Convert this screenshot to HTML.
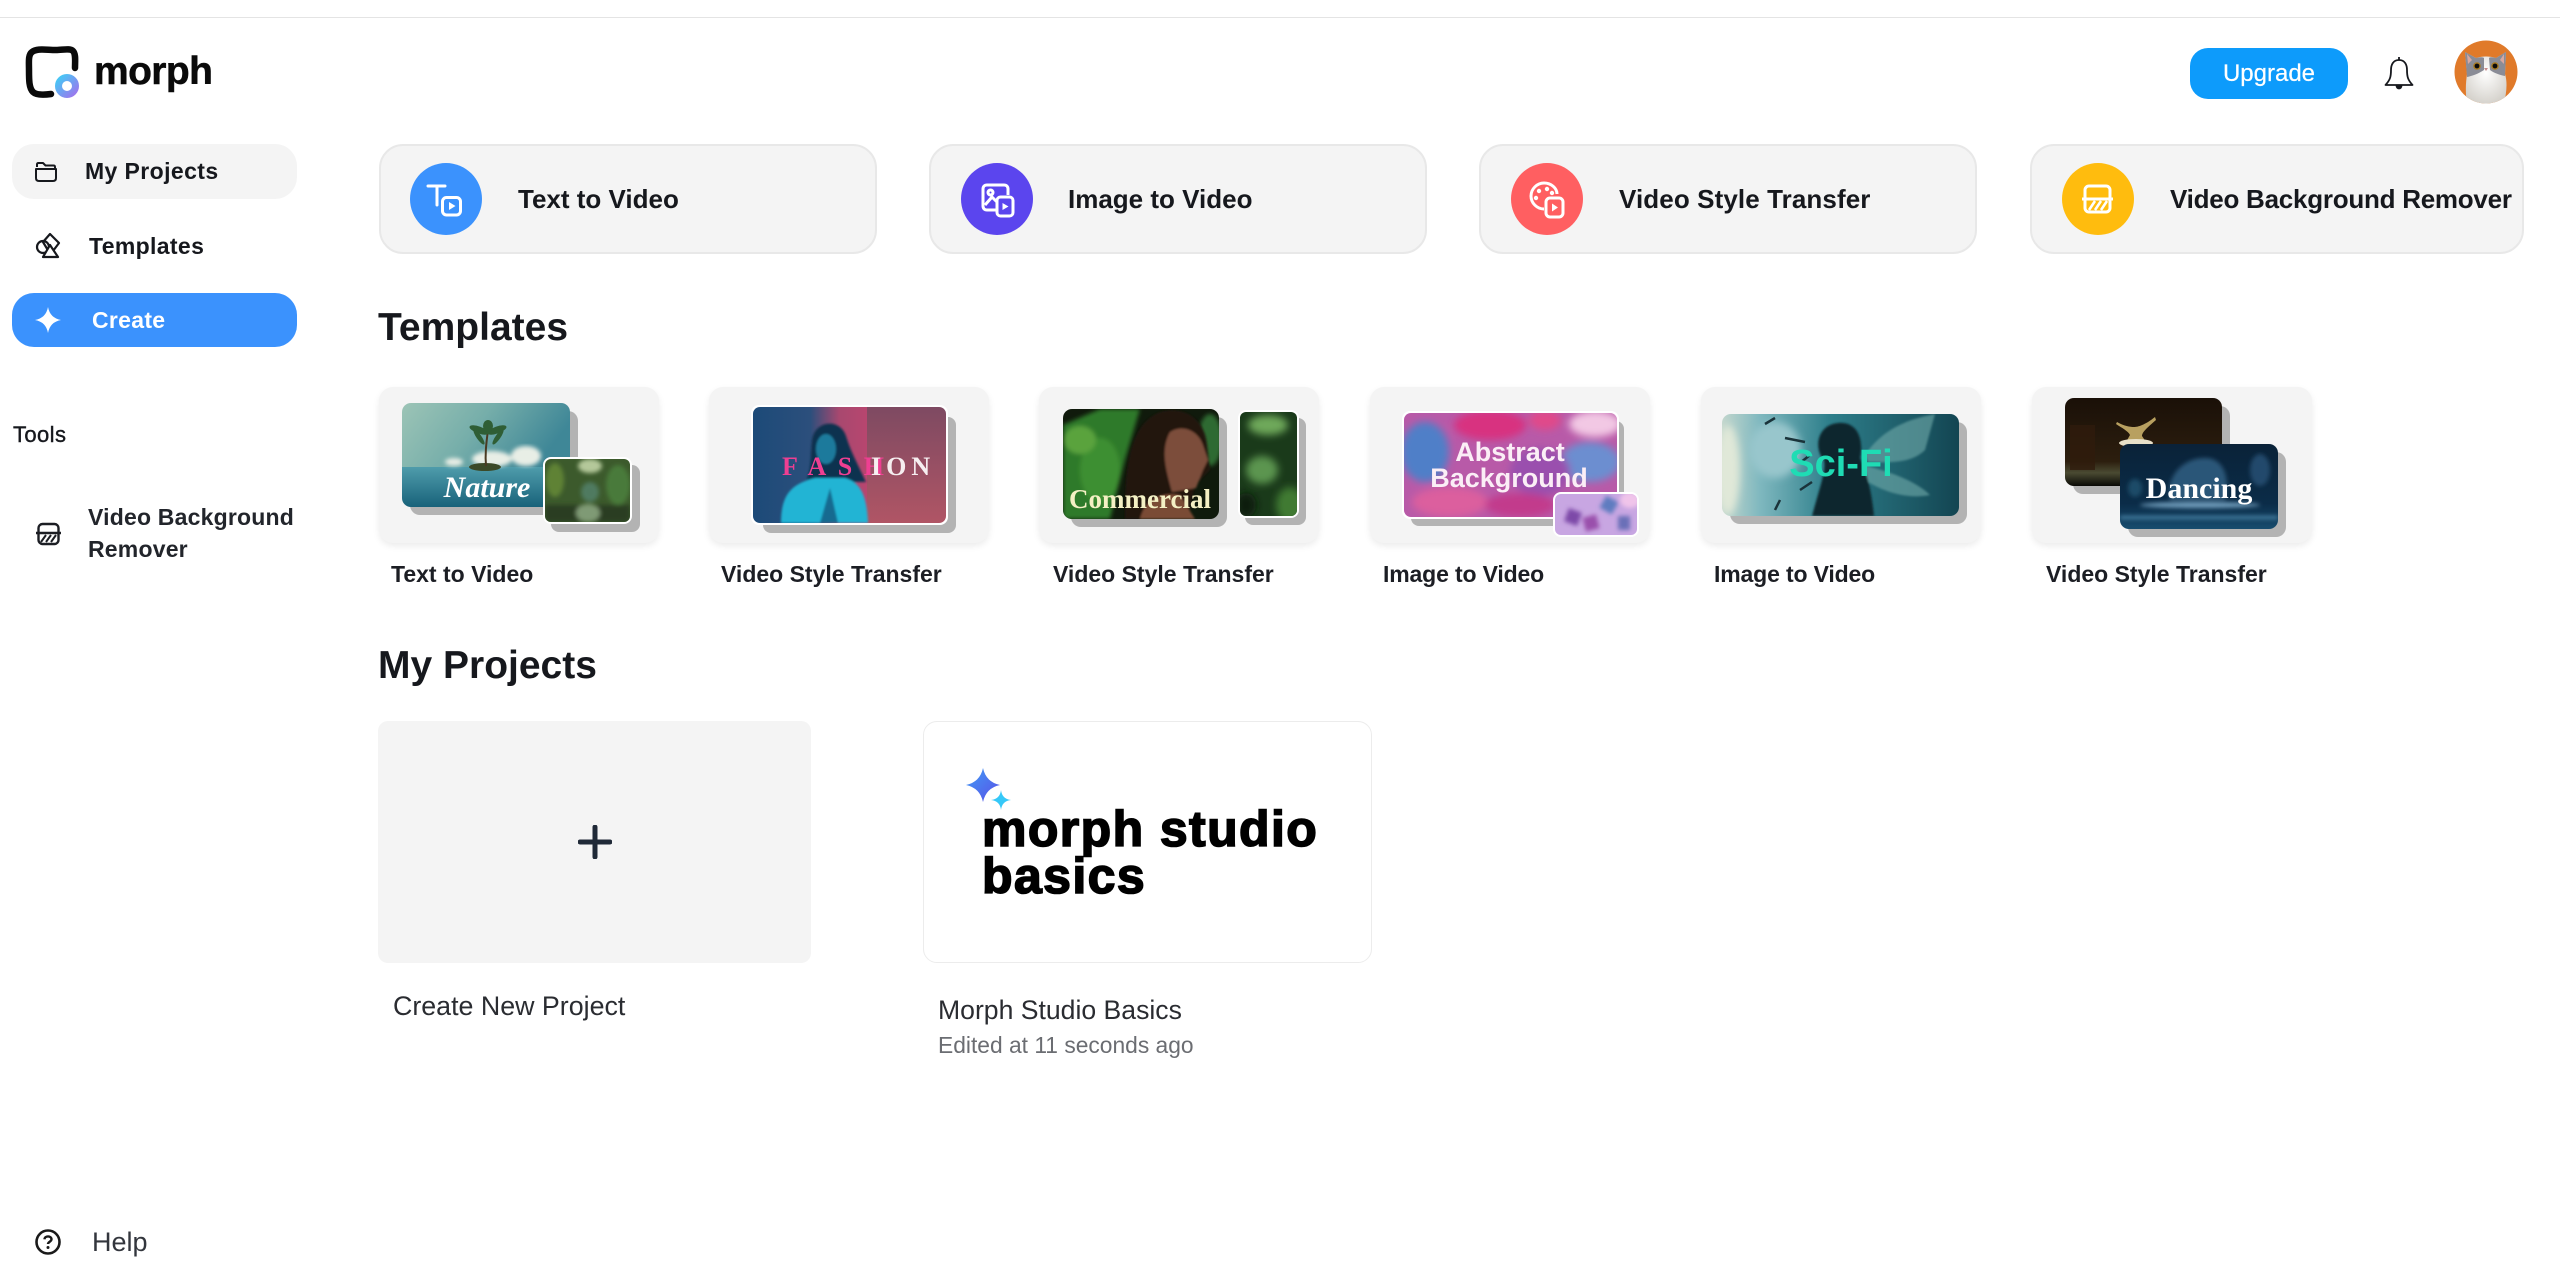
<!DOCTYPE html>
<html><head><meta charset="utf-8"><title>Morph Studio</title>
<style>
html,body{margin:0;padding:0;background:#fff;width:2560px;height:1283px;overflow:hidden}
body{position:relative;font-family:"Liberation Sans",sans-serif;color:#16181d}
.a{position:absolute}
.t{position:absolute;white-space:nowrap;line-height:40px;height:40px}
.pill{position:absolute;left:12px;width:285px;border-radius:22px}
.ac{position:absolute;top:144px;height:106px;width:494px;background:#f4f4f4;border:2px solid #e8e8e8;border-radius:24px}
.ci{position:absolute;top:163px;width:72px;height:72px;border-radius:50%}
.at{font-size:26px;font-weight:700;top:179px;color:#16181d}
.tc{position:absolute;top:387px;width:280px;height:156px;background:#f4f4f4;border-radius:14px;box-shadow:0 3px 7px rgba(0,0,0,.08)}
.tl{font-size:23px;font-weight:700;top:554px;color:#1c1e24}
h2{position:absolute;margin:0;font-size:39px;line-height:44px;font-weight:700;color:#16181d;white-space:nowrap}
</style></head><body>
<div class="a" style="left:0;top:17px;width:2560px;height:1px;background:#e4e4e4"></div>

<!-- logo -->
<svg class="a" style="left:20px;top:40px" width="70" height="66" viewBox="20 40 70 66">
<defs><linearGradient id="lg" x1="0" y1="0" x2="1" y2="1"><stop offset="0" stop-color="#45c8f5"/><stop offset="1" stop-color="#9a78ee"/></linearGradient></defs>
<path d="M51 94C44 95 36 95 33 92 29 88 29 80 29 70 29 62 28 55 32 52 37 48 46 50 56 50 63 50 70 48 73 51 76 54 75 61 75 68" fill="none" stroke="#0a0a0a" stroke-width="6.500" stroke-linecap="round"/>
<circle cx="67" cy="86" r="8.500" fill="#fff" stroke="url(#lg)" stroke-width="7"/>
</svg>
<div class="t" style="left:94px;top:52px;font-size:39px;font-weight:700;letter-spacing:-.6px;color:#0a0a0a;-webkit-text-stroke:.5px #0a0a0a">morph</div>

<!-- sidebar -->
<div class="pill" style="top:144px;height:55px;background:#f4f4f4"></div>
<svg class="a" style="left:34px;top:160px" width="24" height="24" viewBox="0 0 24 24" fill="none" stroke="#16181d" stroke-width="2" stroke-linejoin="round"><path d="M3 7V4.500C3 3.600 3.600 3 4.500 3H9L11.500 5.500H19.500C20.500 5.500 21 6 21 7V9"/><path d="M2 9H22V18C22 20 21 21 19 21H5C3 21 2 20 2 18Z"/></svg>
<div class="t" style="left:85px;top:151px;font-size:23px;font-weight:700;letter-spacing:.4px">My Projects</div>
<svg class="a" style="left:34px;top:232px" width="28" height="28" viewBox="0 0 28 28" fill="none" stroke="#16181d" stroke-width="2.200" stroke-linejoin="round"><circle cx="9" cy="15" r="6"/><path d="M16 2L25 11 19 19 15 20 9 10Z"/><path d="M16 13L24 25H9Z" fill="#fff"/></svg>
<div class="t" style="left:89px;top:226px;font-size:23px;font-weight:700;letter-spacing:.35px">Templates</div>
<div class="pill" style="top:293px;height:54px;background:#3b92fd"></div>
<svg class="a" style="left:35px;top:307px" width="26" height="26" viewBox="0 0 26 26"><path d="M13 0Q15 11 26 13 15 15 13 26 11 15 0 13 11 11 13 0Z" fill="#fff"/></svg>
<div class="t" style="left:92px;top:300px;font-size:23px;font-weight:700;color:#fff;letter-spacing:.3px">Create</div>
<div class="t" style="left:13px;top:415px;font-size:22px;font-weight:400;letter-spacing:.4px;-webkit-text-stroke:.4px #16181d">Tools</div>
<svg class="a" style="left:36px;top:522px" width="25" height="24" viewBox="0 0 25 24" fill="none" stroke="#1c1e24" stroke-width="2.400"><rect x="2.500" y="2" width="20" height="20" rx="4"/><path d="M0 11H25"/><path d="M5 20L10 13M10 20L15 13M15 20L20 13" stroke-width="2"/></svg>
<div class="t" style="left:88px;top:497px;font-size:23px;font-weight:700;letter-spacing:.2px;color:#22252b">Video Background</div>
<div class="t" style="left:88px;top:529px;font-size:23px;font-weight:700;letter-spacing:.2px;color:#22252b">Remover</div>
<svg class="a" style="left:35px;top:1229px" width="26" height="26" viewBox="0 0 26 26" fill="none" stroke="#1a1a1a" stroke-width="2.600"><circle cx="13" cy="13" r="11.500"/><path d="M9.500 10.300C9.700 6.500 16.500 6.500 16.500 10.300 16.500 12.700 13 12.700 13 15" stroke-width="2.400"/><circle cx="13" cy="18.500" r="1.500" fill="#1a1a1a" stroke="none"/></svg>
<div class="t" style="left:92px;top:1222px;font-size:27px;color:#33363d">Help</div>

<!-- header right -->
<div class="a" style="left:2190px;top:48px;width:158px;height:51px;border-radius:18px;background:#0d9bfb"></div>
<div class="t" style="left:2190px;width:158px;text-align:center;top:54px;font-size:24px;color:#fff;-webkit-text-stroke:.2px #fff">Upgrade</div>
<svg class="a" style="left:2381px;top:55px" width="36" height="36" viewBox="0 0 36 36" fill="none" stroke="#16181d" stroke-width="1.800" stroke-linejoin="round"><path d="M18 2V5"/><path d="M18 5C12 5 10 10 10 15 10 22 9 25 4.500 30H31.500C27 25 26 22 26 15 26 10 24 5 18 5Z"/><path d="M15.500 30.500C15.500 34.500 20.500 34.500 20.500 30.500" fill="#16181d"/></svg>
<svg class="a" style="left:2454px;top:40px" width="64" height="64" viewBox="0 0 64 64">
<defs><clipPath id="av"><circle cx="32" cy="32" r="31.500"/></clipPath><radialGradient id="cw" cx=".5" cy=".4" r=".8"><stop offset="0" stop-color="#fff"/><stop offset="1" stop-color="#c8c4bc"/></radialGradient></defs>
<g clip-path="url(#av)"><rect width="64" height="64" fill="#e07a2a"/>
<path d="M13 64C11 50 12 42 13 34L11 12 22 18C28 16 36 16 42 18L52 12 51 34C54 44 52 54 50 64Z" fill="url(#cw)"/>
<path d="M11 12L22 18C26 17 29 17 30 18L30 30C24 34 18 36 13 37ZM52 12L42 18C38 17 36 17 35 18L36 30C40 33 46 35 51 36Z" fill="#8a8c96"/>
<path d="M13 14L18 20 14 24Z" fill="#d8a8a0"/><path d="M50 14L46 20 50 24Z" fill="#d8a8a0"/>
<circle cx="23" cy="26" r="3.800" fill="#a87a20"/><circle cx="41" cy="26" r="3.800" fill="#a87a20"/><circle cx="23" cy="26" r="2.400" fill="#0a0a0a"/><circle cx="41" cy="26" r="2.400" fill="#0a0a0a"/>
<path d="M30 28H34L32 31Z" fill="#c58a8a"/></g></svg>

<!-- action cards -->
<div class="ac" style="left:379px"></div><div class="ac" style="left:929px"></div><div class="ac" style="left:1479px"></div><div class="ac" style="left:2030px;width:490px"></div>
<div class="ci" style="left:410px;background:#3b92fd"></div><div class="ci" style="left:961px;background:#5b45ee"></div><div class="ci" style="left:1511px;background:#ff5f61"></div><div class="ci" style="left:2062px;background:#ffbc0e"></div>
<svg class="a" style="left:410px;top:163px" width="72" height="72" viewBox="0 0 72 72" fill="none" stroke="#fff" stroke-width="3" stroke-linecap="round"><path d="M18 23H35M27 23V42"/><rect x="32.500" y="34.500" width="18" height="17.500" rx="4"/><path d="M39 39L45.500 43 39 47Z" fill="#fff" stroke="none"/></svg>
<svg class="a" style="left:961px;top:163px" width="72" height="72" viewBox="0 0 72 72" fill="none" stroke="#fff" stroke-width="3" stroke-linejoin="round"><path d="M35 47H26C23.500 47 22 45.500 22 43V26C22 23.500 23.500 22 26 22H43C45.500 22 47 23.500 47 26V32"/><circle cx="29.500" cy="29.500" r="2.500"/><path d="M24 42L31 34 36 39"/><rect x="36" y="34" width="16" height="19" rx="3.500"/><path d="M41.500 40L47.500 43.500 41.500 47Z" fill="#fff" stroke="none"/></svg>
<svg class="a" style="left:1511px;top:163px" width="72" height="72" viewBox="0 0 72 72" fill="none" stroke="#fff" stroke-width="3" stroke-linejoin="round"><path d="M33 46C26 46 20 40 20 33 20 26 26 20 33 20 40 20 46 25 46 31"/><circle cx="28" cy="28" r="2.200" fill="#fff" stroke="none"/><circle cx="36" cy="26" r="2.200" fill="#fff" stroke="none"/><circle cx="25" cy="35" r="2.200" fill="#fff" stroke="none"/><circle cx="41" cy="30" r="2.200" fill="#fff" stroke="none"/><rect x="35" y="35" width="17" height="19" rx="4"/><path d="M41 40.500L47 44.500 41 48.500Z" fill="#fff" stroke="none"/></svg>
<svg class="a" style="left:2062px;top:163px" width="72" height="72" viewBox="0 0 72 72" fill="none" stroke="#fff" stroke-width="3"><rect x="23" y="23" width="25" height="26" rx="4"/><path d="M20 36H51"/><path d="M27 47L33 38M33 47L39 38M39 47L45 38" stroke-width="2.600"/></svg>
<div class="t at" style="left:518px">Text to Video</div>
<div class="t at" style="left:1068px">Image to Video</div>
<div class="t at" style="left:1619px;letter-spacing:.1px">Video Style Transfer</div>
<div class="t at" style="left:2170px;letter-spacing:-.25px">Video Background Remover</div>

<h2 style="left:378px;top:306px">Templates</h2>

<!-- template cards -->
<div class="tc" style="left:379px"></div><div class="tc" style="left:709px"></div><div class="tc" style="left:1039px"></div><div class="tc" style="left:1370px"></div><div class="tc" style="left:1701px"></div><div class="tc" style="left:2032px"></div>

<svg class="a" style="left:0;top:0" width="2560" height="600" viewBox="0 0 2560 600">
<defs>
<filter id="b1"><feGaussianBlur stdDeviation="1"/></filter>
<filter id="b2"><feGaussianBlur stdDeviation="2"/></filter>
<filter id="b4"><feGaussianBlur stdDeviation="4"/></filter>
<clipPath id="c1"><rect x="402" y="403" width="168" height="104" rx="9"/></clipPath>
<clipPath id="c1b"><rect x="545" y="459" width="85" height="63" rx="6"/></clipPath>
<clipPath id="c2"><rect x="753" y="407" width="193" height="116" rx="7"/></clipPath>
<clipPath id="c3"><rect x="1063" y="409" width="156" height="110" rx="9"/></clipPath>
<clipPath id="c3b"><rect x="1240" y="412" width="57" height="104" rx="6"/></clipPath>
<clipPath id="c4"><rect x="1404" y="413" width="213" height="104" rx="7"/></clipPath>
<clipPath id="c4b"><rect x="1555" y="494" width="82" height="41" rx="6"/></clipPath>
<clipPath id="c5"><rect x="1722" y="414" width="237" height="102" rx="9"/></clipPath>
<clipPath id="c6"><rect x="2065" y="398" width="157" height="88" rx="9"/></clipPath>
<clipPath id="c6b"><rect x="2120" y="444" width="158" height="85" rx="9"/></clipPath>
<linearGradient id="sky" x1="0" y1="0" x2="1" y2=".3"><stop offset="0" stop-color="#9cc4b6"/><stop offset=".5" stop-color="#76aeaa"/><stop offset="1" stop-color="#3f8797"/></linearGradient>
<linearGradient id="sea" x1="0" y1="0" x2="0" y2="1"><stop offset="0" stop-color="#4f9cab"/><stop offset="1" stop-color="#18627a"/></linearGradient>
<linearGradient id="fa" x1="0" y1="0" x2="1" y2="0"><stop offset="0" stop-color="#1c4a78"/><stop offset=".5" stop-color="#2c4f7c"/><stop offset=".75" stop-color="#a8486f"/><stop offset="1" stop-color="#b8466f"/></linearGradient>
<linearGradient id="fb" x1="0" y1="0" x2="0" y2="1"><stop offset="0" stop-color="#7e4a62"/><stop offset="1" stop-color="#b05565"/></linearGradient>
<linearGradient id="sf" x1="0" y1="0" x2="1" y2="0"><stop offset="0" stop-color="#c2d6cd"/><stop offset=".16" stop-color="#7fb8bf"/><stop offset=".45" stop-color="#2e7f8b"/><stop offset="1" stop-color="#134552"/></linearGradient>
<linearGradient id="bal" x1="0" y1="0" x2="0" y2="1"><stop offset="0" stop-color="#1a1008"/><stop offset=".72" stop-color="#2c1e0e"/><stop offset=".85" stop-color="#4a4a32"/><stop offset="1" stop-color="#0a0a06"/></linearGradient>
<linearGradient id="wat" x1="0" y1="0" x2="0" y2="1"><stop offset="0" stop-color="#0a2238"/><stop offset=".7" stop-color="#0b2c48"/><stop offset="1" stop-color="#174c6e"/></linearGradient>
</defs>

<!-- shadows -->
<g fill="#b3b3b3">
<rect x="410" y="411" width="168" height="104" rx="10"/><rect x="551" y="465" width="89" height="67" rx="8"/>
<rect x="763" y="417" width="193" height="116" rx="8"/>
<rect x="1071" y="417" width="156" height="110" rx="10"/><rect x="1245" y="418" width="61" height="107" rx="8"/>
<rect x="1411" y="421" width="213" height="105" rx="8"/>
<rect x="1730" y="422" width="237" height="102" rx="10"/>
<rect x="2073" y="406" width="157" height="88" rx="10"/><rect x="2128" y="452" width="158" height="85" rx="10"/>
</g>

<!-- 1 nature -->
<g clip-path="url(#c1)"><rect x="402" y="403" width="168" height="65" fill="url(#sky)"/><rect x="402" y="467" width="168" height="40" fill="url(#sea)"/>
<g filter="url(#b2)" fill="#e8eee6"><ellipse cx="526" cy="456" rx="15" ry="10"/><ellipse cx="492" cy="459" rx="20" ry="8"/><ellipse cx="454" cy="462" rx="9" ry="4"/></g>
<ellipse cx="485" cy="467" rx="16" ry="4" fill="#3b4a28"/><path d="M486 466C485 455 486 445 488 430" stroke="#4a3a22" stroke-width="2" fill="none"/>
<g fill="#2f5e35"><ellipse cx="479" cy="430" rx="10" ry="3.500" transform="rotate(20 479 430)"/><ellipse cx="497" cy="430" rx="10" ry="3.500" transform="rotate(-20 497 430)"/><ellipse cx="488" cy="426" rx="5" ry="6"/><ellipse cx="479" cy="437" rx="9" ry="2.500" transform="rotate(55 479 437)"/><ellipse cx="498" cy="437" rx="9" ry="2.500" transform="rotate(-55 498 437)"/></g>
<text x="487" y="497" text-anchor="middle" font-family="Liberation Serif" font-style="italic" font-weight="700" font-size="30" fill="#fff">Nature</text></g>
<rect x="543" y="457" width="89" height="67" rx="8" fill="#fff"/>
<g clip-path="url(#c1b)"><rect x="545" y="459" width="85" height="63" fill="#3c5a2c"/>
<g filter="url(#b2)"><ellipse cx="590" cy="466" rx="12" ry="7" fill="#b4c89a"/><ellipse cx="555" cy="480" rx="9" ry="17" fill="#5f8236"/><ellipse cx="618" cy="485" rx="12" ry="20" fill="#4a7a3a"/><ellipse cx="590" cy="492" rx="9" ry="10" fill="#4f7a60"/><rect x="545" y="505" width="85" height="17" fill="#2a3c22"/><ellipse cx="588" cy="513" rx="12" ry="9" fill="#7f9a75"/></g></g>

<!-- 2 fashion -->
<rect x="751" y="405" width="197" height="120" rx="8" fill="#fff"/>
<g clip-path="url(#c2)"><rect x="753" y="407" width="115" height="116" fill="url(#fa)"/><rect x="867" y="407" width="79" height="116" fill="url(#fb)"/>
<g filter="url(#b1)"><path d="M812 440C815 420 840 418 846 436 850 450 858 465 866 482L806 482C812 468 810 455 812 440Z" fill="#10324f"/>
<ellipse cx="826" cy="449" rx="10" ry="15" fill="#1e7a9c"/>
<path d="M781 523C781 496 790 484 815 478H845C860 482 867 495 868 523Z" fill="#24b4d4"/><path d="M820 523L830 488 838 523Z" fill="#136a90"/></g>
<g font-family="Liberation Serif" font-size="26" font-weight="700"><text x="782" y="475" fill="#ee3f92" letter-spacing="11.500">FASH</text><text x="871" y="475" fill="#f6eef0" letter-spacing="5">ION</text></g></g>

<!-- 3 commercial -->
<g clip-path="url(#c3)"><rect x="1063" y="409" width="156" height="110" fill="#101a0c"/>
<g filter="url(#b2)"><path d="M1063 425L1100 409H1140L1125 460 1110 519H1063Z" fill="#2f7a2a"/><ellipse cx="1100" cy="470" rx="20" ry="32" fill="#3e8f30"/><ellipse cx="1080" cy="440" rx="16" ry="14" fill="#5aa33e"/><ellipse cx="1210" cy="440" rx="12" ry="26" fill="#2d6a32"/></g>
<g filter="url(#b1)"><path d="M1125 519C1125 470 1128 425 1160 412 1185 405 1205 420 1207 445L1210 470 1195 485C1190 505 1190 510 1188 519Z" fill="#241610"/>
<path d="M1170 432C1182 424 1198 430 1203 445L1208 460 1203 470 1196 488 1172 492C1166 470 1160 450 1170 432Z" fill="#7c4e3a"/>
<path d="M1140 519C1145 497 1165 492 1180 495L1195 519Z" fill="#7a4c36"/></g>
<text x="1140" y="508" text-anchor="middle" font-family="Liberation Serif" font-size="27" font-weight="700" fill="#f4f0c4">Commercial</text></g>
<rect x="1238" y="410" width="61" height="108" rx="8" fill="#fff"/>
<g clip-path="url(#c3b)"><rect x="1240" y="412" width="57" height="104" fill="#1a3a1a"/><g filter="url(#b4)"><ellipse cx="1268" cy="425" rx="20" ry="10" fill="#6ea85a"/><ellipse cx="1262" cy="470" rx="16" ry="14" fill="#5c9550"/><ellipse cx="1290" cy="505" rx="14" ry="18" fill="#3f7a33"/><ellipse cx="1246" cy="505" rx="10" ry="12" fill="#0c1a0c"/></g></g>

<!-- 4 abstract -->
<rect x="1402" y="411" width="217" height="108" rx="8" fill="#fff"/>
<g clip-path="url(#c4)"><rect x="1404" y="413" width="213" height="104" fill="#b85aa8"/>
<g filter="url(#b4)"><ellipse cx="1425" cy="452" rx="24" ry="30" fill="#4f7fc8"/><ellipse cx="1490" cy="425" rx="36" ry="15" fill="#d83080"/><ellipse cx="1595" cy="424" rx="26" ry="13" fill="#f2c8e4"/><ellipse cx="1590" cy="462" rx="30" ry="20" fill="#6c8ed0"/><ellipse cx="1540" cy="472" rx="30" ry="24" fill="#9a4fae"/><ellipse cx="1450" cy="502" rx="38" ry="15" fill="#dc5f9e"/><ellipse cx="1520" cy="505" rx="35" ry="12" fill="#c23a8c"/><ellipse cx="1545" cy="420" rx="16" ry="10" fill="#e04a8a"/></g>
<g font-family="Liberation Sans" font-size="27" font-weight="700" fill="#fbeef6" text-anchor="middle"><text x="1510" y="461">Abstract</text><text x="1509" y="487">Background</text></g></g>
<rect x="1553" y="492" width="86" height="45" rx="8" fill="#fff"/>
<g clip-path="url(#c4b)"><rect x="1555" y="494" width="82" height="41" fill="#c8a6e2"/><g filter="url(#b2)"><rect x="1566" y="510" width="14" height="14" fill="#7d4aa8" transform="rotate(20 1573 517)"/><rect x="1602" y="498" width="14" height="14" fill="#5f7cc0" transform="rotate(30 1609 505)"/><rect x="1584" y="516" width="14" height="14" fill="#9a50ac" transform="rotate(-15 1591 523)"/><rect x="1618" y="516" width="12" height="14" fill="#6a70b8"/><ellipse cx="1630" cy="500" rx="10" ry="8" fill="#f0c4ea"/></g></g>

<!-- 5 scifi -->
<g clip-path="url(#c5)"><rect x="1722" y="414" width="237" height="102" fill="url(#sf)"/>
<g filter="url(#b4)"><ellipse cx="1728" cy="470" rx="12" ry="45" fill="#e0e8d8"/><ellipse cx="1775" cy="450" rx="26" ry="28" fill="#98c6cc"/></g>
<g filter="url(#b1)"><path d="M1865 455C1885 425 1915 418 1935 414L1925 450C1910 465 1885 462 1868 462ZM1862 465C1885 470 1915 480 1930 495 1905 500 1880 490 1865 480Z" fill="#6aa5a4" opacity=".65"/>
<path d="M1812 516C1822 480 1826 470 1824 460 1814 450 1816 425 1838 423 1858 421 1864 440 1860 458 1868 475 1872 495 1874 516Z" fill="#10262e"/></g>
<g stroke="#1a333a" stroke-width="2.500"><path d="M1765 424L1775 418M1785 438L1805 442M1800 463L1810 455M1775 510L1780 500M1800 490L1812 482"/></g>
<text x="1841" y="476" text-anchor="middle" font-family="Liberation Sans" font-size="38" font-weight="700" fill="#1fdcb4">Sci-Fi</text></g>

<!-- 6 dancing -->
<g clip-path="url(#c6)"><rect x="2065" y="398" width="157" height="88" fill="url(#bal)"/><rect x="2070" y="425" width="25" height="45" fill="#2f1c0c" opacity=".8"/>
<g transform="translate(0,-14)"><path d="M2117 436C2124 440 2130 441 2134 441 2138 441 2145 439 2155 431L2156 434C2148 441 2142 446 2142 450L2146 456H2126L2130 449C2128 445 2122 442 2116 438Z" fill="#b8a060"/><ellipse cx="2136" cy="457" rx="17" ry="4" fill="#e8e0c8"/></g></g>
<g clip-path="url(#c6b)"><rect x="2120" y="444" width="158" height="85" fill="url(#wat)"/>
<g filter="url(#b2)"><path d="M2170 500C2165 480 2180 458 2205 458 2225 458 2230 480 2225 500Z" fill="#2a5678"/><ellipse cx="2200" cy="505" rx="60" ry="3" fill="#6f9dbc"/><rect x="2120" y="516" width="158" height="3" fill="#4b85a8"/><ellipse cx="2260" cy="470" rx="10" ry="16" fill="#244a6c"/><ellipse cx="2135" cy="488" rx="7" ry="9" fill="#1a4c68"/></g>
<text x="2199" y="498" text-anchor="middle" font-family="Liberation Serif" font-size="30" font-weight="700" fill="#fff">Dancing</text></g>
</svg>

<div class="t tl" style="left:391px">Text to Video</div>
<div class="t tl" style="left:721px">Video Style Transfer</div>
<div class="t tl" style="left:1053px">Video Style Transfer</div>
<div class="t tl" style="left:1383px;letter-spacing:-.15px">Image to Video</div>
<div class="t tl" style="left:1714px;letter-spacing:-.15px">Image to Video</div>
<div class="t tl" style="left:2046px">Video Style Transfer</div>

<h2 style="left:378px;top:644px">My Projects</h2>

<div class="a" style="left:378px;top:721px;width:433px;height:242px;background:#f4f4f4;border-radius:10px"></div>
<svg class="a" style="left:578px;top:825px" width="34" height="34" viewBox="0 0 34 34"><path d="M17 2V32M2 17H32" stroke="#1f2937" stroke-width="5" stroke-linecap="round"/></svg>
<div class="t" style="left:393px;top:986px;font-size:26.800px;color:#2a2c31">Create New Project</div>

<div class="a" style="left:923px;top:721px;width:447px;height:240px;background:#fff;border:1.500px solid #ececec;border-radius:14px"></div>
<svg class="a" style="left:960px;top:762px" width="60" height="60" viewBox="0 0 60 60">
<defs><linearGradient id="st" x1="0" y1="0" x2="1" y2="1"><stop offset="0" stop-color="#3f9cf5"/><stop offset="1" stop-color="#5a4fe8"/></linearGradient></defs>
<path d="M23 6Q26 20 40 23 26 26 23 40 20 26 6 23 20 20 23 6Z" fill="url(#st)"/>
<path d="M41 28Q42 37 51 38 42 39 41 48 40 39 31 38 40 37 41 28Z" fill="#35c8f8"/>
</svg>
<div class="t" style="left:982px;top:805px;font-size:50px;line-height:48px;height:48px;font-weight:700;color:#000;-webkit-text-stroke:1.600px #000;letter-spacing:1.400px">morph studio</div>
<div class="t" style="left:982px;top:852px;font-size:50px;line-height:48px;height:48px;font-weight:700;color:#000;-webkit-text-stroke:1.600px #000;letter-spacing:1.400px">basics</div>
<div class="t" style="left:938px;top:990px;font-size:26.600px;color:#2a2c31">Morph Studio Basics</div>
<div class="t" style="left:938px;top:1025px;font-size:22.800px;color:#6b6d72">Edited at 11 seconds ago</div>
</body></html>
